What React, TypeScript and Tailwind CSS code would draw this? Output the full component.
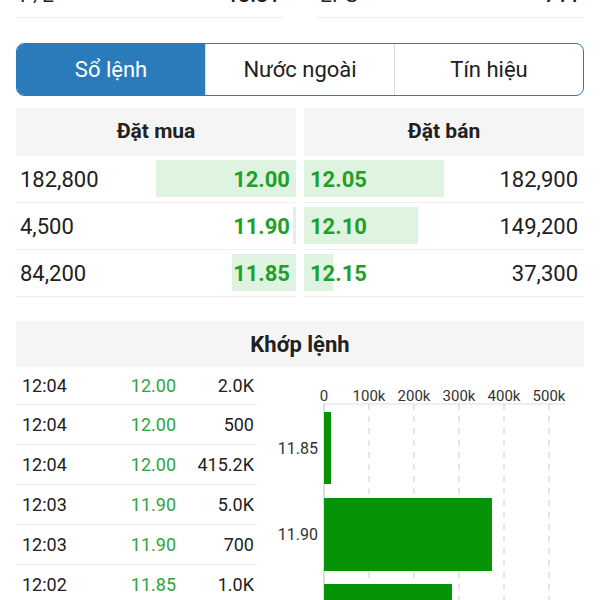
import React from "react";

const buys = [
  { qty: "182,800", price: "12.00", w: 140 },
  { qty: "4,500", price: "11.90", w: 3 },
  { qty: "84,200", price: "11.85", w: 64 },
];

const sells = [
  { qty: "182,900", price: "12.05", w: 140 },
  { qty: "149,200", price: "12.10", w: 114 },
  { qty: "37,300", price: "12.15", w: 29 },
];

const trades = [
  ["12:04", "12.00", "2.0K"],
  ["12:04", "12.00", "500"],
  ["12:04", "12.00", "415.2K"],
  ["12:03", "11.90", "5.0K"],
  ["12:03", "11.90", "700"],
  ["12:02", "11.85", "1.0K"],
];

function VolumeChart() {
  const ticks = ["0", "100k", "200k", "300k", "400k", "500k"];
  return (
    <svg width="326" height="240" className="block">
      <line x1="66" y1="37" x2="308" y2="37" stroke="#ddd" strokeWidth="1" />
      {ticks.map((t, i) => {
        const x = 66 + i * 45;
        return (
          <g key={t}>
            {i > 0 && (
              <line x1={x} y1="37" x2={x} y2="240" stroke="#ccc" strokeWidth="1" strokeDasharray="6 6" />
            )}
            <text x={x} y="34" textAnchor="middle" fontSize="15" fill="#333" fontFamily="Roboto, sans-serif">
              {t}
            </text>
          </g>
        );
      })}
      <line x1="66" y1="37" x2="66" y2="240" stroke="#bbb" strokeWidth="1" />
      <rect x="66" y="45" width="7" height="72" fill="#079307" />
      <rect x="66" y="131" width="168" height="73" fill="#079307" />
      <rect x="66" y="217" width="128" height="30" fill="#079307" />
      <text x="60" y="87" textAnchor="end" fontSize="16" fill="#333" fontFamily="Roboto, sans-serif">11.85</text>
      <text x="60" y="173" textAnchor="end" fontSize="16" fill="#333" fontFamily="Roboto, sans-serif">11.90</text>
    </svg>
  );
}

export default function App() {
  return (
    <div className="w-[600px] h-[600px] overflow-hidden bg-white text-[#212121] font-['Roboto',sans-serif]">
      {/* stats row, mostly scrolled off */}
      <div className="px-4 flex gap-8 -mt-[26px]">
        <div className="flex-1 h-[44px] flex items-center justify-between border-b border-[#eee] px-1 text-[21px]">
          <span>P/E</span>
          <span className="font-medium">13.31</span>
        </div>
        <div className="flex-1 h-[44px] flex items-center justify-between border-b border-[#eee] px-1 text-[21px]">
          <span>EPS</span>
          <span className="font-medium">711</span>
        </div>
      </div>

      {/* tabs */}
      <div className="mx-4 mt-[25px] h-[53px] flex rounded-lg border border-[#2b7bbb] overflow-hidden text-[22px]">
        <div className="flex-1 flex items-center justify-center bg-[#2b7bbb] text-white">Sổ lệnh</div>
        <div className="flex-1 flex items-center justify-center border-l border-[#ddd]">Nước ngoài</div>
        <div className="flex-1 flex items-center justify-center border-l border-[#ddd]">Tín hiệu</div>
      </div>

      {/* order book */}
      <div className="mx-4 mt-3 grid grid-cols-2 gap-2">
        <div>
          <div className="h-[48px] bg-[#f5f5f5] flex items-center justify-center text-[21px] font-bold">Đặt mua</div>
          {buys.map((b) => (
            <div key={b.qty} className="relative h-[47px] flex items-center justify-between border-b border-[#eee] pl-1 pr-1.5 text-[22px]">
              <div className="absolute right-0 top-[4px] bottom-[5px] bg-[#dff3e1]" style={{ width: b.w }} />
              <span className="relative">{b.qty}</span>
              <span className="relative font-bold text-[#1fa02a]">{b.price}</span>
            </div>
          ))}
        </div>
        <div>
          <div className="h-[48px] bg-[#f5f5f5] flex items-center justify-center text-[21px] font-bold">Đặt bán</div>
          {sells.map((s) => (
            <div key={s.qty} className="relative h-[47px] flex items-center justify-between border-b border-[#eee] pl-1.5 pr-1.5 text-[22px]">
              <div className="absolute left-0 top-[4px] bottom-[5px] bg-[#dff3e1]" style={{ width: s.w }} />
              <span className="relative font-bold text-[#1fa02a]">{s.price}</span>
              <span className="relative">{s.qty}</span>
            </div>
          ))}
        </div>
      </div>

      {/* matched orders */}
      <div className="mx-4 mt-6 h-[46px] bg-[#f5f5f5] flex items-center justify-center text-[22px] font-bold">Khớp lệnh</div>
      <div className="mx-4 flex">
        <div className="w-[242px]">
          {trades.map((t, i) => (
            <div key={i} className={`${i === 0 ? "h-[38px]" : "h-[40px]"} flex items-center border-b border-[#eee] text-[18px]`}>
              <span className="w-[80px] pl-1.5">{t[0]}</span>
              <span className="w-[80px] text-right text-[#2ea63a]">{t[1]}</span>
              <span className="flex-1 text-right pr-1">{t[2]}</span>
            </div>
          ))}
        </div>
        <VolumeChart />
      </div>
    </div>
  );
}
